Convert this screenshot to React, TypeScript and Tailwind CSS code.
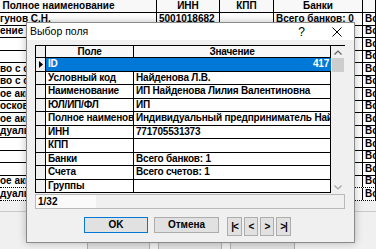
const BG_COLS = ['w-[196px] -ml-[39px] pl-[39px]', 'w-[63px]', 'w-[54px]', 'w-[89px]', 'flex-1']

const BG_ROWS: string[][] = [
  ['гунов С.Н.', '5001018682', '', 'Всего банков: 0', 'Всего счетов: 0'],
  ['ение "Вектор"', '7705123456', '770501001', 'Всего банков: 1', 'Всего счетов: 1'],
  ['', '', '', 'Всего банков: 0', 'Всего счетов: 0'],
  ['', '', '', 'Всего банков: 0', 'Всего счетов: 0'],
  ['во с ограниченной', '7701234567', '770101001', 'Всего банков: 1', 'Всего счетов: 1'],
  ['во с ограниченной', '7702345678', '770201001', 'Всего банков: 1', 'Всего счетов: 1'],
  ['ое акционерное', '7703456789', '770301001', 'Всего банков: 2', 'Всего счетов: 2'],
  ['осковский завод', '7704567890', '770401001', 'Всего банков: 1', 'Всего счетов: 1'],
  ['ое акционерное', '7706789012', '770601001', 'Всего банков: 1', 'Всего счетов: 1'],
  ['дуальный', '771705531373', '', 'Всего банков: 1', 'Всего счетов: 1'],
  ['', '', '', 'Всего банков: 0', 'Всего счетов: 0'],
  ['', '', '', 'Всего банков: 0', 'Всего счетов: 0'],
  ['', '', '', 'Всего банков: 0', 'Всего счетов: 0'],
  ['ое акционерное', '7707890123', '770701001', 'Всего банков: 1', 'Всего счетов: 1'],
  ['дуальный', '772801234567', '', 'Всего банков: 1', 'Всего счетов: 1'],
]

const FIELDS: [string, string][] = [
  ['Условный код', 'Найденова Л.В.'],
  ['Наименование', 'ИП Найденова Лилия Валентиновна'],
  ['ЮЛ/ИП/ФЛ', 'ИП'],
  ['Полное наименование', 'Индивидуальный предприниматель Найденова Лилия Валентиновна'],
  ['ИНН', '771705531373'],
  ['КПП', ''],
  ['Банки', 'Всего банков: 1'],
  ['Счета', 'Всего счетов: 1'],
  ['Группы', ''],
]

function BackgroundGrid() {
  return (
    <div className="flex h-full flex-col">
      <div className="bg-white">
        <div className="flex h-[13px] border-b border-black bg-[#f8f8f8]">
          {['Полное наименование', 'ИНН', 'КПП', 'Банки', ''].map((h, i) => (
            <div
              key={i}
              className={`${i === 0 ? 'w-[196px] -ml-[39px]' : BG_COLS[i]} flex items-center justify-center border-r border-black`}
            >
              {h}
            </div>
          ))}
        </div>
        {BG_ROWS.map((row, r) => (
          <div
            key={r}
            className={`flex h-[12.5px] border-b border-black ${r >= 13 ? 'border-dotted' : ''}`}
          >
            {row.map((cell, i) => (
              <div
                key={i}
                className={`${BG_COLS[i]} flex items-center overflow-hidden whitespace-nowrap border-r border-black pr-[1px] ${i > 0 ? 'pl-[2px]' : ''}`}
              >
                {cell}
              </div>
            ))}
          </div>
        ))}
      </div>
      <div className="h-[12.5px] bg-[#d6d6d6]" />
      <div className="flex flex-1 flex-col bg-[#f0f0f0]">
        <div className="h-[10px]" />
        <div className="flex gap-[8px] border-t border-[#c8c8c8] pl-[87px] pt-[17px]">
          <div className="h-[22px] w-[63px] border border-[#adadad] bg-[#e1e1e1]" />
          <div className="h-[22px] w-[64px] border border-[#adadad] bg-[#e1e1e1]" />
          <div className="h-[22px] w-[65px] border border-[#adadad] bg-[#e1e1e1]" />
        </div>
      </div>
    </div>
  )
}

function Chevron({ up, color }: { up?: boolean; color: string }) {
  return (
    <svg width="8" height="5" viewBox="0 0 8 5">
      <path
        d={up ? 'M0.5 4.5 L4 1 L7.5 4.5' : 'M0.5 0.5 L4 4 L7.5 0.5'}
        fill="none"
        stroke={color}
        strokeWidth="1.2"
      />
    </svg>
  )
}

function Dialog() {
  return (
    <div className="absolute left-[26px] top-[22px] flex h-[221px] w-[329px] flex-col border border-[#8a8a8a] bg-[#f0f0f0] shadow-[0_0_8px_rgba(0,0,0,0.25)]">
      <div className="flex h-[17px] items-center bg-white pl-[3px] pr-[12px] font-normal">
        <span className="text-[10.5px]">Выбор поля</span>
        <span className="ml-auto text-[12px]">?</span>
        <svg className="ml-[27px]" width="10" height="10" viewBox="0 0 10 10">
          <path d="M0.5 0.5 L9.5 9.5 M9.5 0.5 L0.5 9.5" stroke="#000" strokeWidth="1" />
        </svg>
      </div>

      <div className="flex flex-1 flex-col pl-[8px] pr-[9px] pt-[5px]">
        <div className="flex h-[148px] border-l border-t border-black bg-white tracking-[-0.2px]">
          <div className="flex flex-col">
            <div className="flex h-[12px] border-b border-black bg-[#f8f8f8]">
              <div className="w-[10px] border-r border-black bg-[#f0f0f0]" />
              <div className="flex w-[88px] items-center justify-center border-r border-black">
                Поле
              </div>
              <div className="flex w-[197px] items-center justify-center border-r border-black">
                Значение
              </div>
            </div>

            <div className="flex h-[13.5px] border-b border-black">
              <div className="flex w-[10px] items-center justify-center border-r border-black bg-[#f0f0f0]">
                <svg width="4" height="7" viewBox="0 0 4 7">
                  <path d="M0 0 L4 3.5 L0 7 Z" fill="#000" />
                </svg>
              </div>
              <div className="flex w-[285px] items-center bg-[#0078d7] px-[2px] text-white">
                <span>ID</span>
                <span className="ml-auto">417</span>
              </div>
            </div>

            {FIELDS.map(([name, value]) => (
              <div key={name} className="flex h-[13.5px] border-b border-black">
                <div className="w-[10px] border-r border-black bg-[#f0f0f0]" />
                <div className="flex w-[88px] items-center overflow-hidden whitespace-nowrap border-r border-black px-[2px]">
                  {name}
                </div>
                <div className="flex w-[197px] items-center overflow-hidden whitespace-nowrap border-r border-black px-[2px]">
                  {value}
                </div>
              </div>
            ))}
          </div>

          <div className="flex w-[14px] flex-col bg-[#f0f0f0]">
            <div className="flex h-[12px] items-center justify-center">
              <Chevron up color="#606060" />
            </div>
            <div className="mx-[1px] h-[14px] bg-[#cdcdcd]" />
            <div className="flex-1" />
            <div className="flex h-[12px] items-center justify-center">
              <Chevron color="#a3a3a3" />
            </div>
          </div>
        </div>

        <div className="mt-[1px] flex h-[15px] border border-[#b9b9b9]">
          <div className="flex w-[60px] items-center bg-[#fafafa] pl-[2px]">1/32</div>
        </div>

        <div className="mt-[8px] flex items-start pl-[49px]">
          <div className="flex h-[16px] w-[64px] items-center justify-center border border-[#0078d7] bg-[#e1e1e1]">
            OK
          </div>
          <div className="ml-[6px] flex h-[16px] w-[65px] items-center justify-center border border-[#adadad] bg-[#e1e1e1]">
            Отмена
          </div>
          <div className="ml-[8px] flex gap-[2px]">
            {[
              ['|<', 'w-[15px]'],
              ['<', 'w-[14px]'],
              ['>', 'w-[14px]'],
              ['>|', 'w-[15px]'],
            ].map(([label, w]) => (
              <div
                key={label}
                className={`${w} flex h-[19px] items-center justify-center border border-[#adadad] bg-[#e1e1e1] tracking-[-1px]`}
              >
                {label}
              </div>
            ))}
          </div>
        </div>
      </div>
    </div>
  )
}

export default function App() {
  return (
    <div className="relative h-[249px] w-[376px] overflow-hidden bg-[#f0f0f0] text-[10px] font-bold leading-none text-black [font-family:'Liberation_Sans',Arial,sans-serif]">
      <BackgroundGrid />
      <Dialog />
    </div>
  )
}
